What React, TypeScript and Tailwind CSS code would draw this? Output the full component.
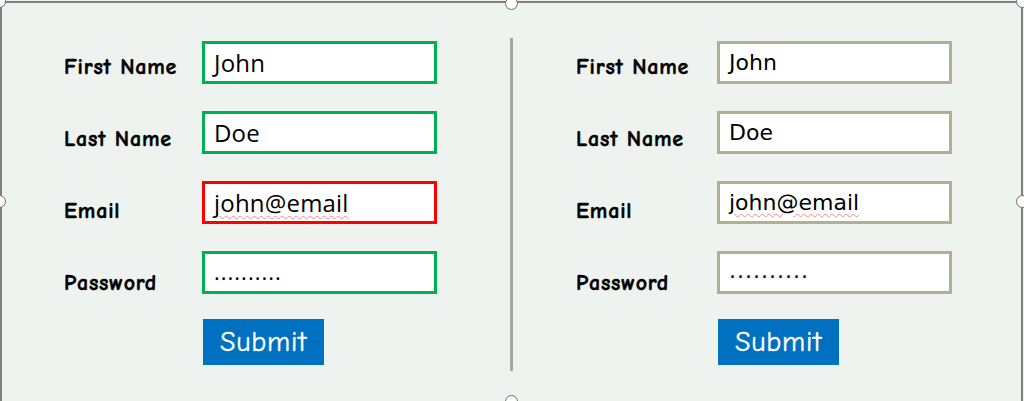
import React from "react";

type Field = { label: string; value: string; labelTop: string; invalid?: boolean; squiggle?: boolean };

const fields: Field[] = [
  { label: "First Name", value: "John", labelTop: "mt-[11px]" },
  { label: "Last Name", value: "Doe", labelTop: "mt-[13px]" },
  { label: "Email", value: "john@email", labelTop: "mt-[15px]", invalid: true, squiggle: true },
  { label: "Password", value: "..........", labelTop: "mt-[17px]" },
];

const comic = { fontFamily: '"Comic Sans MS", "Comic Neue", "Liberation Sans", sans-serif' };

function FormPanel({ variant }: { variant: "validated" | "plain" }) {
  const validated = variant === "validated";
  return (
    <div className={validated ? "flex flex-col gap-[27px] pl-[64px] pt-[41px] w-[510px]" : "flex flex-col gap-[27px] pl-[63px] pt-[41px]"}>
      {fields.map((f) => {
        const border = validated
          ? f.invalid
            ? "border-[#ff0000]"
            : "border-[#00b050]"
          : "border-[#b1b18f]";
        const isDots = f.value.startsWith(".");
        const size = validated && !isDots ? "text-[24px] tracking-[0.2px]" : "text-[22px]";
        return (
          <div key={f.label} className="flex items-start h-[43px] overflow-visible">
            <div
              className={`${f.labelTop} ${validated ? "w-[138px]" : "w-[141px]"} text-[22px] leading-[30px] font-bold tracking-[0.8px] text-black whitespace-nowrap [-webkit-text-stroke:0.5px_black]`}
              style={comic}
            >
              {f.label}
            </div>
            <div
              className={`w-[235px] h-[43px] border-[3px] ${border} bg-white flex items-center pl-[9px] ${size} text-black`}
              style={{ fontFamily: validated ? '"Open Sans", "Noto Sans", sans-serif' : '"DejaVu Sans", "Noto Sans", sans-serif' }}
            >
              <span
                className={
                  f.squiggle
                    ? "underline decoration-wavy decoration-[#f28b8b] decoration-1 underline-offset-[3px] leading-none"
                    : isDots
                    ? "leading-none -mt-[4px] tracking-[1px]"
                    : "leading-none"
                }
              >
                {f.value}
              </span>
            </div>
          </div>
        );
      })}
      <div className={validated ? "ml-[139px] -mt-[2px]" : "ml-[142px] -mt-[2px]"}>
        <button
          className="w-[121px] h-[46px] bg-[#0070c0] text-white text-[28px] tracking-[0.8px] flex items-center justify-center [-webkit-text-stroke:0.4px_white]"
          style={comic}
        >
          Submit
        </button>
      </div>
    </div>
  );
}

function Handle({ pos }: { pos: string }) {
  return <div className={`absolute ${pos} w-[13px] h-[13px] rounded-full bg-white border-[1.5px] border-[#6b6b6b]`} />;
}

export default function App() {
  return (
    <div className="relative w-[1024px] h-[401px] overflow-hidden bg-[#eff3f0]">
      <div className="flex">
        <FormPanel variant="validated" />
        <div className="mt-[38px] w-[3px] h-[333px] bg-[#a6a6a6]" />
        <FormPanel variant="plain" />
      </div>

      {/* selection frame */}
      <div className="absolute left-0 top-[1px] w-[1023px] h-[420px] border-2 border-[#808080] pointer-events-none" />
      <Handle pos="-left-[7px] -top-[5px]" />
      <Handle pos="left-[505px] -top-[3px]" />
      <Handle pos="left-[1016px] -top-[5px]" />
      <Handle pos="-left-[7px] top-[195px]" />
      <Handle pos="left-[1016px] top-[195px]" />
      <Handle pos="left-[505px] top-[395px]" />
    </div>
  );
}
